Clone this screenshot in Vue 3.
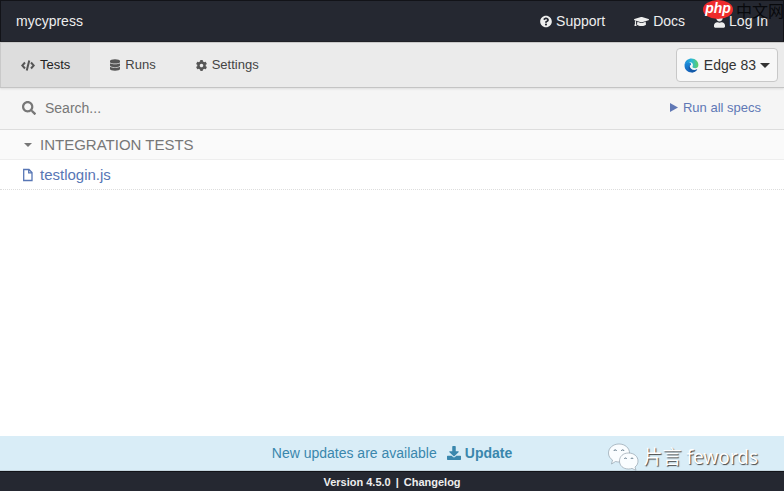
<script setup>
import { ref } from 'vue'

const query = ref('')

const links = [
  {
    label: 'Support',
    box: '0 0 512 512',
    width: 12,
    path: 'M504 256c0 136.997-111.043 248-248 248S8 392.997 8 256C8 119.083 119.043 8 256 8s248 111.083 248 248zM262.655 90c-54.497 0-89.255 22.957-116.549 63.758-3.536 5.286-2.353 12.415 2.715 16.258l34.699 26.31c5.205 3.947 12.621 3.008 16.665-2.122 17.864-22.658 30.113-35.797 57.303-35.797 20.429 0 45.698 13.148 45.698 32.958 0 14.976-12.363 22.667-32.534 33.976C247.128 238.528 216 254.941 216 296v4c0 6.627 5.373 12 12 12h56c6.627 0 12-5.373 12-12v-1.333c0-28.462 83.186-29.647 83.186-106.667 0-58.002-60.165-102-116.531-102zM256 338c-25.365 0-46 20.635-46 46 0 25.364 20.635 46 46 46s46-20.636 46-46c0-25.365-20.635-46-46-46z',
  },
  {
    label: 'Docs',
    box: '0 0 640 512',
    width: 15,
    path: 'M622.34 153.2L343.4 67.5c-15.2-4.67-31.6-4.67-46.79 0L17.66 153.2c-23.54 7.23-23.54 38.36 0 45.59l48.63 14.94c-10.67 13.19-17.23 29.28-17.88 46.9C38.78 266.15 32 276.11 32 288c0 10.78 5.68 19.85 13.86 25.65L20.33 428.53C18.11 438.52 25.71 448 35.94 448h56.11c10.24 0 17.84-9.48 15.62-19.47L82.14 313.65C90.32 307.85 96 298.78 96 288c0-11.57-6.47-21.25-15.66-26.87.76-15.02 8.44-28.3 20.69-36.72L296.6 284.5c9.06 2.78 26.44 6.25 46.79 0l278.95-85.7c23.55-7.24 23.55-38.36 0-45.6zM352.79 315.09c-28.53 8.76-52.84 3.92-65.59 0l-145.02-44.55L128 384c0 35.35 85.96 64 192 64s192-28.65 192-64l-14.18-113.47-145.03 44.56z',
  },
  {
    label: 'Log In',
    box: '0 0 448 512',
    width: 11,
    path: 'M224 256c70.7 0 128-57.3 128-128S294.7 0 224 0 96 57.3 96 128s57.3 128 128 128zm89.6 32h-16.7c-22.2 10.2-46.9 16-72.9 16s-50.6-5.8-72.9-16h-16.7C60.2 288 0 348.2 0 422.4V464c0 26.5 21.5 48 48 48h352c26.5 0 48-21.5 48-48v-41.6c0-74.2-60.2-134.4-134.4-134.4z',
  },
]
</script>

<template>
  <div class="app">
    <header class="topbar">
      <a class="project" href="#">mycypress</a>
      <nav class="links">
        <a v-for="link in links" :key="link.label" class="link" href="#">
          <svg :viewBox="link.box" :width="link.width" height="13" aria-hidden="true"><path :d="link.path" /></svg>
          <span>{{ link.label }}</span>
        </a>
      </nav>
    </header>

    <div class="tabs">
      <nav class="tablist">
        <a class="tab active" href="#">
          <svg viewBox="0 0 28 22" width="14" height="11" aria-hidden="true">
            <path class="line" d="M8 5L2.500 11l5.500 6M20 5l5.500 6-5.500 6M16.500 1l-5 20" />
          </svg>
          <span>Tests</span>
        </a>
        <a class="tab" href="#">
          <svg viewBox="0 0 448 512" width="10" height="12" aria-hidden="true">
            <path d="M448 73.143v45.714C448 159.143 347.667 192 224 192S0 159.143 0 118.857V73.143C0 32.857 100.333 0 224 0s224 32.857 224 73.143zM448 176v102.857C448 319.143 347.667 352 224 352S0 319.143 0 278.857V176c48.125 33.143 136.208 48.572 224 48.572S399.874 209.143 448 176zm0 160v102.857C448 479.143 347.667 512 224 512S0 479.143 0 438.857V336c48.125 33.143 136.208 48.572 224 48.572S399.874 369.143 448 336z" />
          </svg>
          <span>Runs</span>
        </a>
        <a class="tab" href="#">
          <svg viewBox="16 8 480 496" width="11" height="11" aria-hidden="true">
            <path d="M487.4 315.7l-42.6-24.6c4.3-23.2 4.3-47 0-70.2l42.6-24.6c4.900-2.800 7.100-8.600 5.500-14-11.100-35.600-30-67.800-54.700-94.600-3.800-4.100-10-5.100-14.800-2.300L380.800 110c-17.900-15.400-38.500-27.300-60.800-35.100V25.800c0-5.600-3.900-10.500-9.400-11.700-36.700-8.200-74.300-7.800-109.200 0-5.500 1.200-9.400 6.100-9.400 11.700V75c-22.200 7.900-42.800 19.800-60.800 35.100L88.700 85.500c-4.900-2.800-11-1.900-14.800 2.300-24.700 26.700-43.600 58.900-54.700 94.600-1.700 5.400.6 11.200 5.500 14L67.300 221c-4.300 23.200-4.300 47 0 70.200l-42.600 24.600c-4.900 2.800-7.100 8.600-5.500 14 11.100 35.600 30 67.800 54.700 94.600 3.800 4.100 10 5.100 14.800 2.300l42.600-24.600c17.900 15.400 38.500 27.300 60.800 35.100v49.200c0 5.600 3.900 10.500 9.400 11.700 36.700 8.200 74.300 7.800 109.200 0 5.500-1.200 9.400-6.100 9.400-11.700v-49.200c22.200-7.900 42.800-19.800 60.800-35.100l42.600 24.600c4.900 2.800 11 1.900 14.800-2.300 24.700-26.700 43.600-58.900 54.700-94.600 1.500-5.500-.7-11.300-5.600-14.100zM256 336c-44.100 0-80-35.900-80-80s35.900-80 80-80 80 35.900 80 80-35.900 80-80 80z" />
          </svg>
          <span>Settings</span>
        </a>
      </nav>
      <button class="browser" type="button">
        <svg viewBox="0 0 30 28" width="16" height="15" aria-hidden="true">
          <defs>
            <linearGradient id="edge-top" x1="0" y1="0" x2="1" y2="0">
              <stop offset="0" stop-color="#1c86d8" />
              <stop offset="0.5" stop-color="#2bb8d8" />
              <stop offset="1" stop-color="#62d160" />
            </linearGradient>
            <linearGradient id="edge-side" x1="0" y1="0" x2="0" y2="1">
              <stop offset="0" stop-color="#1c8fdc" />
              <stop offset="1" stop-color="#1560b8" />
            </linearGradient>
          </defs>
          <path fill="url(#edge-side)" d="M1 14C1 9 6 6 10 8c3 1 4 3 3 5-3 1-4 4-2 7 3 4 9 4 14 1-2 4-7 6-11 6C7 27 1 22 1 14z" />
          <path fill="#155aa8" d="M10 13c-3 5 0 12 6 14 4-1 7-3 9-6-6 3-14 1-15-8z" />
          <path fill="url(#edge-top)" d="M1 13C2 5 8 1 14 1c8 0 13 6 13 12 0 4-3 6-6 6-3 0-6-1-5-3 2-4 0-8-6-8C6 8 2 10 1 13z" />
        </svg>
        <span>Edge 83</span>
        <svg viewBox="0 0 10 5" width="10" height="5" aria-hidden="true"><path d="M0 0h10L5 5z" /></svg>
      </button>
    </div>

    <div class="searchbar">
      <label class="search">
        <svg viewBox="0 0 512 512" width="14" height="14" role="img" aria-label="Search">
          <path d="M505 442.700L405.300 343c-4.500-4.500-10.600-7-17-7H372c27.600-35.300 44-79.700 44-128C416 93.100 322.900 0 208 0S0 93.100 0 208s93.100 208 208 208c48.300 0 92.700-16.400 128-44v16.300c0 6.400 2.500 12.500 7 17l99.700 99.700c9.400 9.400 24.600 9.400 33.900 0l28.300-28.300c9.400-9.400 9.400-24.600.1-34zM208 336c-70.700 0-128-57.200-128-128 0-70.700 57.200-128 128-128 70.700 0 128 57.200 128 128 0 70.700-57.200 128-128 128z" />
        </svg>
        <input v-model="query" type="text" placeholder="Search..." />
      </label>
      <a class="run-all" href="#">
        <svg viewBox="0 0 8 9" width="8" height="9" aria-hidden="true"><path d="M0 0l8 4.500L0 9z" /></svg>
        <span>Run all specs</span>
      </a>
    </div>

    <main class="specs">
      <button class="folder" type="button">
        <svg viewBox="0 0 12 12" width="12" height="12" aria-hidden="true"><path d="M2 4h8L6 8z" /></svg>
        <span>INTEGRATION TESTS</span>
      </button>
      <a class="spec" href="#">
        <svg viewBox="0 0 12 14" width="12" height="14" aria-hidden="true">
          <path class="outline" d="M1.700 1.500h5.300l3 3v8H1.700zM6.700 1.500v3.300H10" />
        </svg>
        <span>testlogin.js</span>
      </a>
    </main>

    <div class="updates">
      <span>New updates are available</span>
      <a class="update" href="#">
        <svg viewBox="0 0 512 512" width="14" height="14" aria-hidden="true">
          <path d="M216 0h80c13.300 0 24 10.700 24 24v168h87.700c17.800 0 26.700 21.500 14.100 34.100L269.700 378.300c-7.500 7.500-19.800 7.500-27.300 0L90.100 226.100c-12.600-12.600-3.700-34.100 14.100-34.100H192V24c0-13.300 10.700-24 24-24zm296 376v112c0 13.300-10.700 24-24 24H24c-13.300 0-24-10.700-24-24V376c0-13.300 10.700-24 24-24h146.700l49 49c20.100 20.100 52.500 20.100 72.600 0l49-49H488c13.300 0 24 10.700 24 24z" />
        </svg>
        <span>Update</span>
      </a>
      <div class="account">
        <svg viewBox="0 0 32 28" width="32" height="28" aria-hidden="true">
          <path class="bubble" d="M11 1C5 1 .5 5 .5 10c0 3 1.500 5.500 4 7l-1 4 4-2.500c1.500.4 3 .5 4.500.5 6 0 9.500-4 9.500-9S17 1 11 1z" />
          <path class="bubble" d="M20.500 10C15 10 11.500 13.500 11.500 18s3.500 8 9 8c1.200 0 2.500-.2 3.500-.6l4 2-1-3.400c2-1.500 3-3.500 3-6 0-4.500-4-8-9.500-8z" />
          <path class="eye" d="M6 8a1.200 1.200 0 0 1 2.400 0M13.500 8a1.200 1.200 0 0 1 2.400 0M16.500 16a1 1 0 0 1 2 0M23 16a1 1 0 0 1 2 0" />
        </svg>
        <span>片言 fewords</span>
      </div>
    </div>

    <footer class="footer">
      <span>Version 4.5.0</span><span>|</span><a href="#">Changelog</a>
    </footer>

    <div class="stamp">
      <span class="badge">php</span>
      <span class="site">中文网</span>
    </div>
  </div>
</template>

<style>
body {
  margin: 0;
}
</style>

<style scoped>
.app {
  position: relative;
  display: flex;
  flex-direction: column;
  min-height: 100vh;
  overflow: hidden;
  background: #fff;
  font-family: "Liberation Sans", Arial, sans-serif;
  font-size: 14px;
  line-height: 20px;
}
.app *,
.app {
  box-sizing: border-box;
}
a {
  color: inherit;
  text-decoration: none;
}
button,
input {
  margin: 0;
  border: 0;
  font: inherit;
}
svg {
  flex: none;
  fill: currentColor;
}
.topbar {
  display: flex;
  justify-content: space-between;
  align-items: center;
  height: 42px;
  padding: 0 15px;
  border: 1px solid #121318;
  background: #252831;
  color: #eee;
}
.links {
  display: flex;
  gap: 29px;
}
.link {
  display: flex;
  align-items: center;
  gap: 4px;
}
.tabs {
  display: flex;
  justify-content: space-between;
  align-items: center;
  height: 46px;
  padding-right: 6px;
  border-top: 1px solid #c9c9c9;
  border-bottom: 1px solid #c4c4c4;
  background: #ebebeb;
  box-shadow: 0 1px 2px #ddd;
  z-index: 1;
}
.tablist {
  display: flex;
  align-self: stretch;
}
.tab {
  display: flex;
  align-items: center;
  gap: 5px;
  padding: 0 20px;
  color: #444;
  font-size: 13px;
}
.tab svg {
  color: #555;
}
.tab.active {
  border-left: 1px solid #c9c9c9;
  background: #ddd;
  color: #222;
}
.line {
  fill: none;
  stroke: currentColor;
  stroke-width: 4;
}
.browser {
  display: flex;
  align-items: center;
  gap: 4px;
  height: 34px;
  padding: 0 7px;
  border: 1px solid #c8c8c8;
  border-radius: 4px;
  background: #f7f7f7;
  color: #333;
}
.searchbar {
  display: flex;
  justify-content: space-between;
  align-items: center;
  height: 42px;
  padding: 0 23px 2px 22px;
  border-bottom: 1px solid #ddd;
  background: #f5f5f5;
}
.search {
  display: flex;
  flex: 1;
  align-items: center;
  gap: 9px;
  color: #777;
}
.search input {
  flex: 1;
  min-width: 0;
  padding: 0;
  outline: 0;
  background: transparent;
  color: #333;
}
.search input::placeholder {
  color: #777;
  opacity: 1;
}
.run-all {
  display: flex;
  align-items: center;
  gap: 5px;
  color: #6078b5;
  font-size: 13px;
}
.specs {
  flex: 1;
}
.folder,
.spec {
  display: flex;
  align-items: center;
  gap: 6px;
  width: 100%;
  height: 30px;
  padding: 0 22px;
  font-size: 15px;
}
.folder {
  border-bottom: 1px solid #eee;
  background: #fafafa;
  color: #777;
}
.spec {
  border-bottom: 1px dotted #ddd;
  color: #5776b5;
}
.outline {
  fill: none;
  stroke: currentColor;
  stroke-width: 1.3;
}
.updates {
  position: relative;
  display: flex;
  justify-content: center;
  align-items: center;
  gap: 10px;
  height: 35px;
  border-bottom: 1px solid #c4d5de;
  background: #d9edf7;
  color: #3a87ad;
}
.update {
  display: flex;
  align-items: center;
  gap: 4px;
  font-weight: bold;
}
.account {
  position: absolute;
  top: 6px;
  right: 26px;
  display: flex;
  align-items: center;
  gap: 4px;
  color: #fff;
  font-family: "Noto Sans", "Noto Sans CJK SC", sans-serif;
  font-size: 19px;
  line-height: 30px;
  text-shadow: 1px 1px 1px #444;
}
.bubble {
  fill: #fafdff;
  stroke: #8494a0;
  stroke-width: 0.6;
}
.eye {
  fill: none;
  stroke: #667c8c;
}
.footer {
  display: flex;
  justify-content: center;
  align-items: center;
  gap: 5px;
  height: 20px;
  border-top: 1px solid #121318;
  background: #252831;
  color: #eee;
  font-size: 11px;
  font-weight: bold;
}
.stamp {
  position: absolute;
  top: 0;
  right: 0;
  z-index: 2;
  display: flex;
  align-items: center;
  gap: 3px;
  font-size: 16px;
  line-height: 16px;
}
.badge {
  width: 30px;
  height: 19px;
  border-radius: 50%;
  background: #ee2c2c;
  color: #fff;
  font-style: italic;
  font-weight: bold;
  font-size: 14px;
  line-height: 16px;
  text-align: center;
}
.site {
  color: #08090c;
  font-family: "Noto Sans CJK SC", sans-serif;
}
</style>
